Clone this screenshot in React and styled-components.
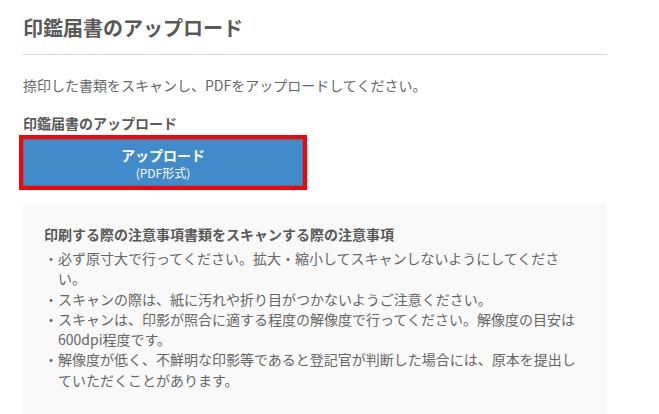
import React from "react";
import styled, { createGlobalStyle } from "styled-components";

const colors = {
  title: "#595959",
  text: "#666666",
  rule: "#d4d4d4",
  primary: "#428bca",
  primaryBorder: "#3a7bb4",
  panel: "#f9f9f9",
  focus: "#ff0000",
};

const GlobalStyle = createGlobalStyle`
  body {
    margin: 0;
    background: #ffffff;
    font-family: "Noto Sans CJK JP", "Noto Sans", sans-serif;
    color: ${colors.text};
  }
`;

const Page = styled.div`
  width: 584px;
  padding: 14px 0 0 23px;
  display: flex;
  flex-flow: column nowrap;
`;

const Header = styled.div`
  border-bottom: 1px solid ${colors.rule};
  padding-bottom: 12px;

  & > h1 {
    margin: 0;
    font-size: 20px;
    line-height: 28px;
    font-weight: 700;
    color: ${colors.title};
  }
`;

const Lead = styled.p`
  margin: 20px 0 0;
  font-size: 14px;
  line-height: 20px;
`;

const Field = styled.div`
  margin-top: 18px;
  display: flex;
  flex-flow: column;
  gap: 6px;

  & > label {
    font-size: 14px;
    line-height: 20px;
    font-weight: 700;
    color: ${colors.title};
  }
`;

const UploadButton = styled.button`
  width: 280px;
  height: 47px;
  padding: 5px 0 6px;
  border: 1px solid ${colors.primaryBorder};
  background: ${colors.primary};
  color: #ffffff;
  outline: 4px solid ${(p) => (p.$focused ? colors.focus : "transparent")};
  font-family: inherit;
  display: flex;
  flex-flow: column;
  align-items: center;
  cursor: pointer;

  & > strong {
    font-size: 14px;
    line-height: 20px;
    font-weight: 700;
  }
  & > span {
    font-size: 12px;
    line-height: 16px;
  }
`;

const Notice = styled.div`
  margin-top: 18px;
  background: ${colors.panel};
  padding: 20px 21px 24px 21px;

  & > h3 {
    margin: 0;
    font-size: 14px;
    line-height: 20px;
    font-weight: 700;
    color: ${colors.title};
  }
`;

const NoticeList = styled.ul`
  list-style: none;
  margin: 4px 0 0;
  padding: 0 0 0 14px;

  & > li {
    font-size: 14px;
    line-height: 20.3px;
    text-indent: -14px;
  }
  & > li::before {
    content: "・";
  }
`;

const notes = [
  "必ず原寸大で行ってください。拡大・縮小してスキャンしないようにしてください。",
  "スキャンの際は、紙に汚れや折り目がつかないようご注意ください。",
  "スキャンは、印影が照合に適する程度の解像度で行ってください。解像度の目安は600dpi程度です。",
  "解像度が低く、不鮮明な印影等であると登記官が判断した場合には、原本を提出していただくことがあります。",
];

export default function App() {
  return (
    <>
      <GlobalStyle />
      <Page>
        <Header>
          <h1>印鑑届書のアップロード</h1>
        </Header>
        <Lead>捺印した書類をスキャンし、PDFをアップロードしてください。</Lead>
        <Field>
          <label>印鑑届書のアップロード</label>
          <UploadButton $focused>
            <strong>アップロード</strong>
            <span>(PDF形式)</span>
          </UploadButton>
        </Field>
        <Notice>
          <h3>印刷する際の注意事項書類をスキャンする際の注意事項</h3>
          <NoticeList>
            {notes.map((n, i) => (
              <li key={i}>{n}</li>
            ))}
          </NoticeList>
        </Notice>
      </Page>
    </>
  );
}
